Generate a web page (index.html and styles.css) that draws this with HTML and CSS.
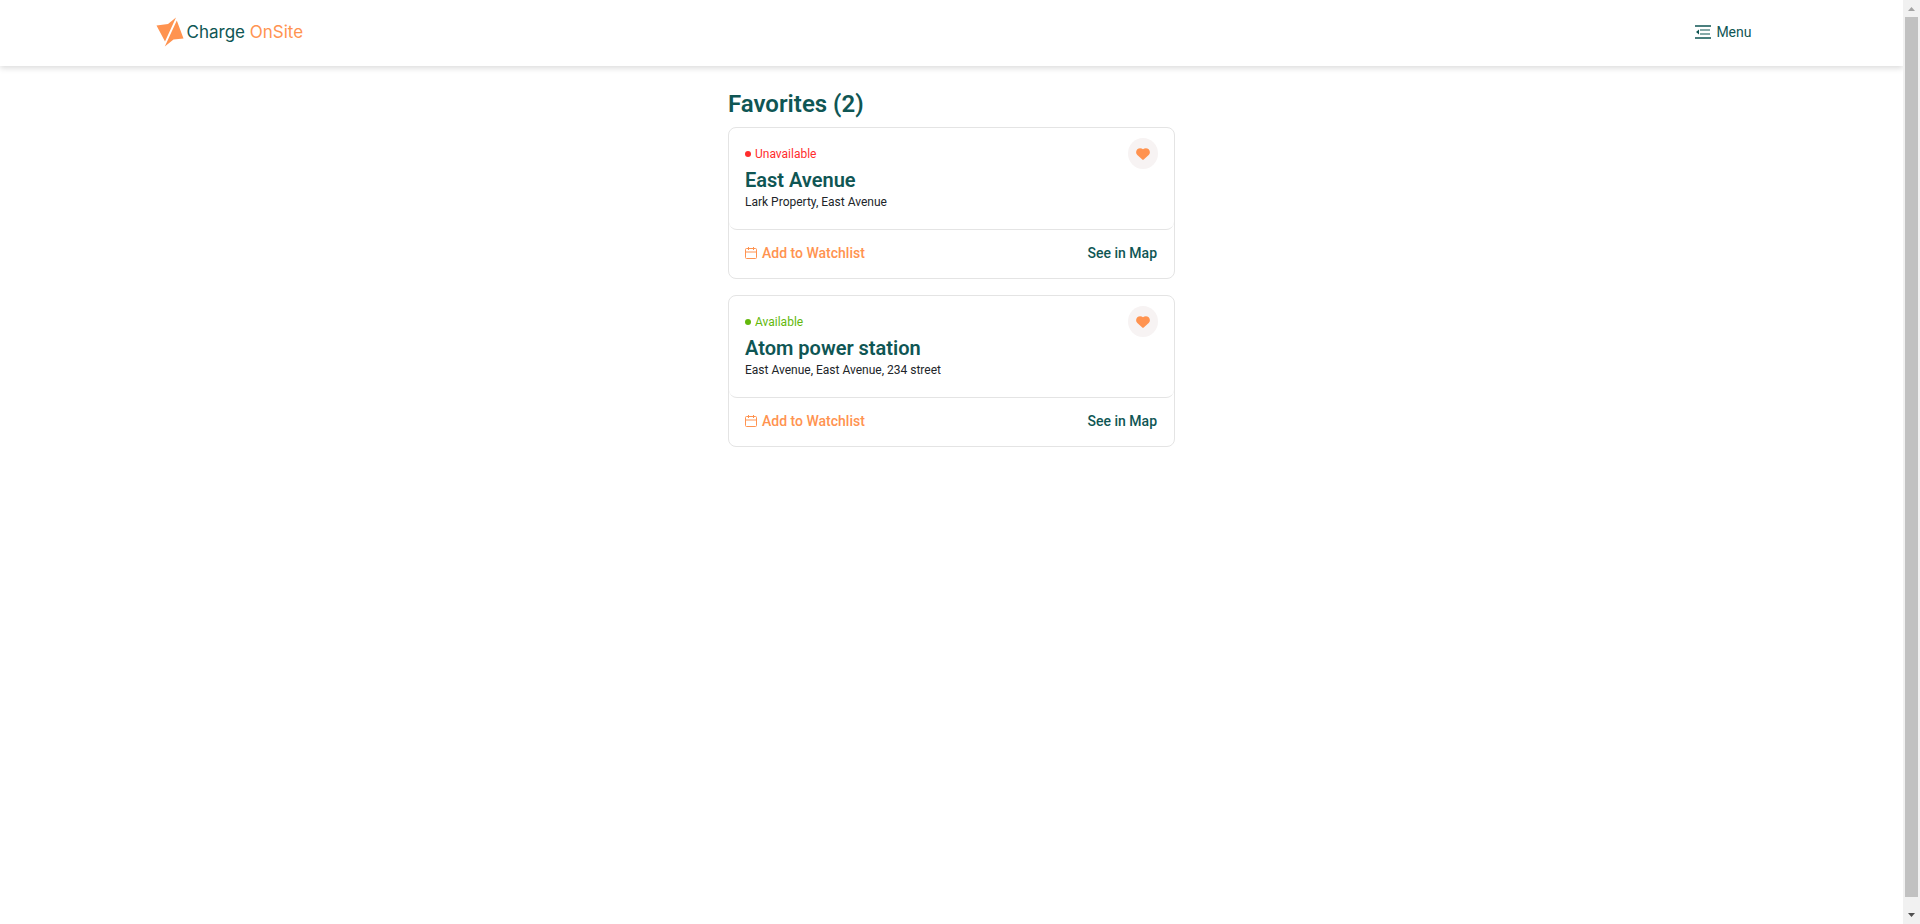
FILE: index.html
```html
<!DOCTYPE html>
<html lang="en">
<head>
<meta charset="utf-8">
<meta name="viewport" content="width=device-width, initial-scale=1">
<title>Charge OnSite - Favorites</title>
<link rel="stylesheet" href="styles.css">
</head>
<body>
<div class="page">
  <header class="header">
    <div class="header-inner">
      <a class="logo" href="#">
        <svg class="logo-mark" viewBox="0 0 28 30" aria-hidden="true">
          <path d="M.5 8.500L12 7L20 .5L9 24.500Z"/>
          <path d="M20.800 3.500L27.500 21.500L17.500 22.500L8.800 29.500Z"/>
        </svg>
        <span class="logo-text">Charge <span class="logo-accent">OnSite</span></span>
      </a>
      <button class="menu" type="button">
        <svg class="menu-icon" viewBox="0 0 16 14" aria-hidden="true">
          <path d="M0 1H16M0 13H16" fill="none" stroke="currentColor" stroke-width="1.400"/>
          <path d="M5 5H15M5 9H15" fill="none" stroke="currentColor" stroke-width="1.200"/>
          <path d="M1 7L4 4.500V9.500Z" fill="currentColor"/>
        </svg>
        Menu
      </button>
    </div>
  </header>
  <main class="content">
    <h1 class="title">Favorites (2)</h1>
    <div class="cards">
      <article class="card">
        <div class="card-body">
          <div class="card-info">
            <p class="status unavailable">Unavailable</p>
            <h2 class="name">East Avenue</h2>
            <p class="address">Lark Property, East Avenue</p>
          </div>
          <button class="favorite" type="button" aria-label="Remove East Avenue from favorites">
            <svg class="heart" viewBox="0 0 14 12" aria-hidden="true"><path d="M7 1.200C8.600-.2 11.200-.2 12.700 1.300C14.300 3 14.300 5.400 12.700 7L7.700 11.600Q7 12.200 6.300 11.600L1.300 7C-.3 5.400-.3 3 1.300 1.300C2.800-.2 5.400-.2 7 1.200Z"/></svg>
          </button>
        </div>
        <div class="card-actions">
          <button class="watch" type="button">
            <svg class="calendar" viewBox="0 0 12 12" aria-hidden="true"><path d="M1.500 1.500H10.500Q11.500 1.500 11.500 2.500V10.500Q11.500 11.500 10.500 11.500H1.500Q.5 11.500 .5 10.500V2.500Q.5 1.500 1.500 1.500ZM.5 5H11.500M3.500 0V3M8.500 0V3"/></svg>
            Add to Watchlist
          </button>
          <a class="map" href="#">See in Map</a>
        </div>
      </article>
      <article class="card">
        <div class="card-body">
          <div class="card-info">
            <p class="status available">Available</p>
            <h2 class="name">Atom power station</h2>
            <p class="address">East Avenue, East Avenue, 234 street</p>
          </div>
          <button class="favorite" type="button" aria-label="Remove Atom power station from favorites">
            <svg class="heart" viewBox="0 0 14 12" aria-hidden="true"><path d="M7 1.200C8.600-.2 11.200-.2 12.700 1.300C14.300 3 14.300 5.400 12.700 7L7.700 11.600Q7 12.200 6.300 11.600L1.300 7C-.3 5.400-.3 3 1.300 1.300C2.800-.2 5.400-.2 7 1.200Z"/></svg>
          </button>
        </div>
        <div class="card-actions">
          <button class="watch" type="button">
            <svg class="calendar" viewBox="0 0 12 12" aria-hidden="true"><path d="M1.500 1.500H10.500Q11.500 1.500 11.500 2.500V10.500Q11.500 11.500 10.500 11.500H1.500Q.5 11.500 .5 10.500V2.500Q.5 1.500 1.500 1.500ZM.5 5H11.500M3.500 0V3M8.500 0V3"/></svg>
            Add to Watchlist
          </button>
          <a class="map" href="#">See in Map</a>
        </div>
      </article>
    </div>
  </main>
</div>
<div class="scrollbar" aria-hidden="true">
  <svg class="arrow arrow-up" viewBox="0 0 17 17"><path d="M5 11L8.500 7L12 11Z"/></svg>
  <div class="thumb"></div>
  <svg class="arrow arrow-down" viewBox="0 0 17 17"><path d="M5 6L8.500 10L12 6Z"/></svg>
</div>
</body>
</html>
```
FILE: styles.css
```css
* { box-sizing: border-box; }

body {
  margin: 0;
  display: flex;
  min-height: 100vh;
  background: #fff;
  color: #212529;
  font-family: Roboto, "Liberation Sans", sans-serif;
  font-size: 14px;
}

h1, h2, p { margin: 0; }

button {
  border: 0;
  padding: 0;
  background: none;
  font: inherit;
  cursor: pointer;
}

a { text-decoration: none; }

svg { display: block; flex: none; }

.page { flex: 1; min-width: 0; }

.header {
  padding: 16px 24px 18px;
  box-shadow: 0 2px 6px rgba(0, 0, 0, 0.15);
}

.header-inner {
  display: flex;
  justify-content: space-between;
  align-items: center;
  max-width: 1592px;
  margin: 0 auto;
}

.logo { display: flex; align-items: center; gap: 3px; }

.logo-mark { width: 28px; height: 32px; fill: #ff9350; }

.logo-text {
  color: #0f5654;
  font-family: Inter, sans-serif;
  font-size: 17px;
  line-height: 30px;
}

.logo-accent { color: #ff9350; }

.menu {
  display: flex;
  align-items: center;
  gap: 5px;
  margin-right: -4px;
  color: #0f5654;
  line-height: 20px;
}

.menu-icon { width: 16px; height: 14px; }

.content {
  width: 100%;
  max-width: 447px;
  margin: 0 auto;
  padding: 20px 0;
}

.title {
  color: #0f5654;
  font-size: 24px;
  font-weight: 600;
  line-height: 36px;
}

.cards { display: grid; gap: 16px; padding-top: 5px; }

.card { border: 1px solid #e4e4e4; border-radius: 8px; }

.card-body {
  display: flex;
  justify-content: space-between;
  align-items: flex-start;
  padding: 10px 16px 19px;
  border-bottom: 1px solid #e4e4e4;
  border-radius: 8px;
}

.card-info { padding-top: 6px; }

.status {
  display: flex;
  align-items: center;
  gap: 4px;
  font-size: 12px;
  line-height: 20px;
}

.status::before {
  content: "";
  width: 6px;
  height: 6px;
  border-radius: 50%;
  background: currentColor;
}

.unavailable { color: #ff2d2d; }
.available { color: #63b80b; }

.name {
  padding-top: 2px;
  color: #0f5654;
  font-size: 20px;
  font-weight: 600;
  line-height: 28px;
}

.address { font-size: 12px; line-height: 16px; }

.favorite {
  display: grid;
  place-items: center;
  width: 30px;
  height: 31px;
  border-radius: 50%;
  background: #f7f3f3;
}

.heart { width: 14px; height: 12px; fill: #ff9350; }

.card-actions {
  display: flex;
  justify-content: space-between;
  align-items: center;
  padding: 11px 17px 13px 16px;
  font-weight: 500;
  line-height: 24px;
}

.watch {
  display: flex;
  align-items: center;
  gap: 5px;
  color: #ff9350;
}

.calendar { width: 12px; height: 12px; fill: none; stroke: currentColor; }

.map { color: #0f5654; }

.scrollbar {
  position: sticky;
  top: 0;
  display: flex;
  flex-direction: column;
  width: 17px;
  height: 100vh;
  background: #f1f1f1;
}

.thumb { flex: 1; margin: 0 2px 10px; background: #c1c1c1; }

.arrow { width: 17px; height: 17px; }
.arrow-up { fill: #a3a3a3; }
.arrow-down { fill: #505050; }
```
